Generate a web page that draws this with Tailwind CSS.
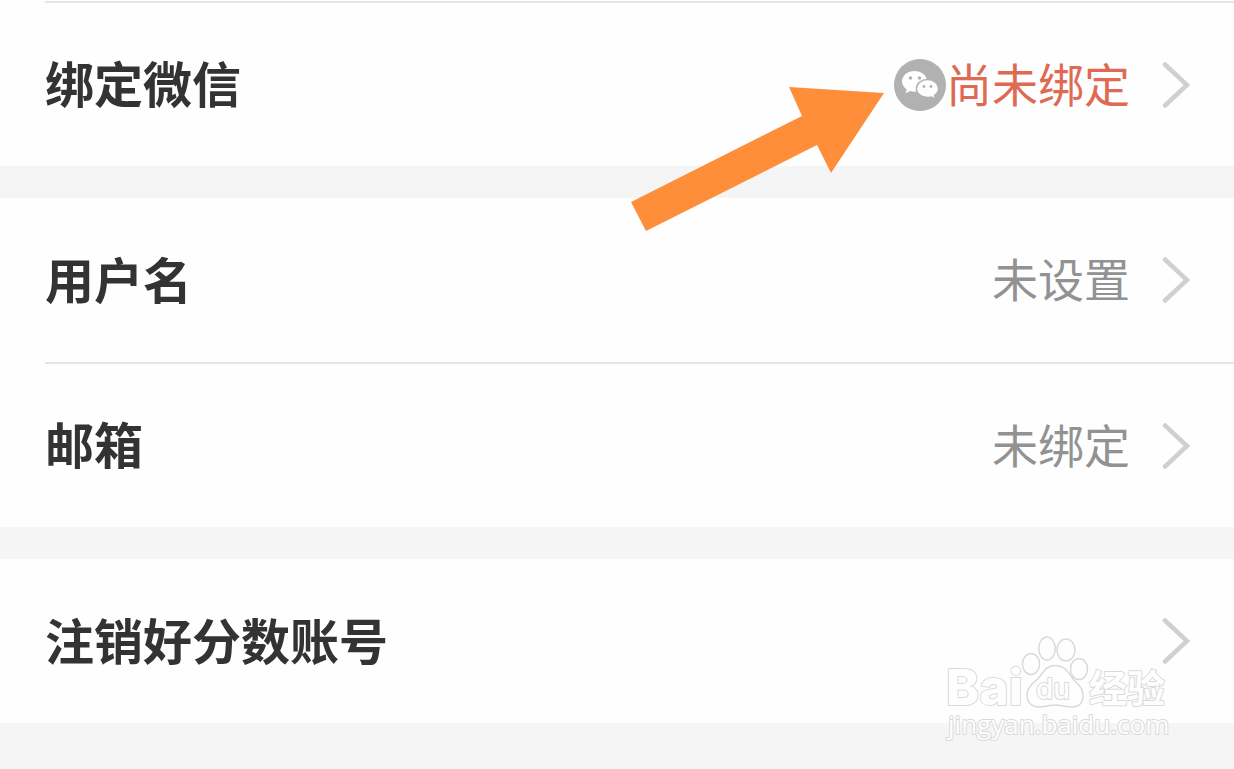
<!DOCTYPE html>
<html lang="zh-Hans">
<head>
  <meta charset="UTF-8">
  <title>账号设置</title>
  <meta name="viewport" content="width=device-width, initial-scale=1">
  <script src="https://cdn.jsdelivr.net/npm/@tailwindcss/browser@4"></script>
</head>
<body class="bg-[#f5f5f5] font-['Noto_Sans_CJK_SC',sans-serif] text-[#333333]">

  <main class="relative flex min-h-screen flex-col gap-8 overflow-hidden">

    <!-- 微信 -->
    <section class="relative bg-[#fefefe] pt-px">
      <div class="ml-[45px] h-0.5 bg-[#e5e5e5]"></div>
      <a href="#wechat" class="flex h-[163px] items-center justify-between pr-11 pl-[45px]">
        <span class="pb-1.5 text-[49px] leading-none font-bold">绑定微信</span>
        <span class="flex items-center gap-8">
          <span class="flex items-center text-[46px] leading-none text-[#de6a53]">
            <svg class="size-[52px]" viewBox="0 0 52 52">
              <circle cx="26" cy="26" r="26" fill="#b1b1b1" />
              <path d="M20.500 12C13.500 12 8 16.500 8 22.300c0 3.300 1.800 6.200 4.700 8.100l-1.100 3.900 4.600-2.200c1.400.4 2.800.6 4.300.6 7 0 12.500-4.600 12.500-10.400S27.500 12 20.500 12z" fill="#fefefe" />
              <path d="M33.500 20.500c-6.200 0-11.100 4-11.100 9s4.900 9 11.100 9c1.400 0 2.700-.2 3.900-.6l4.100 2.100-1-3.600c2.500-1.700 4-4.100 4-6.900 0-5-4.800-9-11-9z" fill="#fefefe" stroke="#b1b1b1" stroke-width="1.400" />
              <g fill="#b1b1b1">
                <circle cx="16.500" cy="19" r="1.700" />
                <circle cx="25.500" cy="19" r="1.700" />
                <circle cx="30" cy="27.500" r="1.400" />
                <circle cx="37" cy="27.500" r="1.400" />
              </g>
            </svg>
            <span class="pb-1.5">尚未绑定</span>
          </span>
          <svg class="h-[46px] w-7" viewBox="0 0 28 46" fill="none" stroke="#d4cfcf" stroke-width="4.500" stroke-linecap="round">
            <path d="M3 2.500l22 20.500L3 43.500" />
          </svg>
        </span>
      </a>
      <!-- 箭头标注 -->
      <svg class="absolute top-[87px] right-[350px] z-10 h-36 w-[253px]" viewBox="0 0 253 144">
        <path d="M0 115L171 29L158 0L253 6L200 86L186 58L15 144z" fill="#ff8e3b" />
      </svg>
    </section>

    <!-- 用户名 / 邮箱 -->
    <section class="bg-[#fefefe]">
      <a href="#username" class="flex h-[164px] items-center justify-between pr-11 pl-[45px]">
        <span class="pb-1.5 text-[49px] leading-none font-bold">用户名</span>
        <span class="flex items-center gap-8">
          <span class="pb-1.5 text-[46px] leading-none text-[#929292]">未设置</span>
          <svg class="h-[46px] w-7" viewBox="0 0 28 46" fill="none" stroke="#d4cfcf" stroke-width="4.500" stroke-linecap="round">
            <path d="M3 2.500l22 20.500L3 43.500" />
          </svg>
        </span>
      </a>
      <div class="ml-[45px] h-0.5 bg-[#e5e5e5]"></div>
      <a href="#email" class="flex h-[163px] items-center justify-between pr-11 pl-[45px]">
        <span class="pb-1.5 text-[49px] leading-none font-bold">邮箱</span>
        <span class="flex items-center gap-8">
          <span class="pb-1.5 text-[46px] leading-none text-[#929292]">未绑定</span>
          <svg class="h-[46px] w-7" viewBox="0 0 28 46" fill="none" stroke="#d4cfcf" stroke-width="4.500" stroke-linecap="round">
            <path d="M3 2.500l22 20.500L3 43.500" />
          </svg>
        </span>
      </a>
    </section>

    <!-- 注销 -->
    <section class="relative bg-[#fefefe]">
      <a href="#cancel" class="flex h-[164px] items-center justify-between pr-11 pl-[45px]">
        <span class="pb-1.5 text-[49px] leading-none font-bold">注销好分数账号</span>
        <svg class="h-[46px] w-7" viewBox="0 0 28 46" fill="none" stroke="#d4cfcf" stroke-width="4.500" stroke-linecap="round">
          <path d="M3 2.500l22 20.500L3 43.500" />
        </svg>
      </a>
      <!-- 水印 -->
      <svg class="pointer-events-none absolute top-[71px] right-[54px] h-[120px] w-[250px]" viewBox="930 630 250 120" fill="#fefefe" stroke="#dadada" stroke-width="2" stroke-linejoin="round">
        <text x="946" y="705" class="font-['Inter',sans-serif] text-[50px] font-extrabold [paint-order:stroke]">Bai</text>
        <ellipse cx="1031" cy="664" rx="8.500" ry="10.500" stroke-width="1.500" />
        <ellipse cx="1047" cy="648.500" rx="8.300" ry="11.500" stroke-width="1.500" />
        <ellipse cx="1066" cy="650" rx="9" ry="11" stroke-width="1.500" />
        <ellipse cx="1079" cy="669" rx="8.500" ry="10.500" stroke-width="1.500" />
        <path d="M1055 665.500c-9 0-12 7-16 12-5 5-12 9-12 18 0 8 6 11.500 12 11.500 6 0 10-2 16-2s11 2 17 2c7 0 11-4.500 11-11.500 0-9-7-12-11-18-4-6-8-12-17-12z" stroke-width="1.500" />
        <text x="1036" y="699" class="font-['Inter',sans-serif] text-[28px] font-medium [paint-order:stroke]">du</text>
        <text x="1089" y="702" class="text-[38px] font-bold [paint-order:stroke]">经验</text>
        <text x="948" y="734" class="font-['Open_Sans',sans-serif] text-[26px] font-normal [paint-order:stroke]">jingyan.baidu.com</text>
      </svg>
    </section>

  </main>

</body>
</html>
